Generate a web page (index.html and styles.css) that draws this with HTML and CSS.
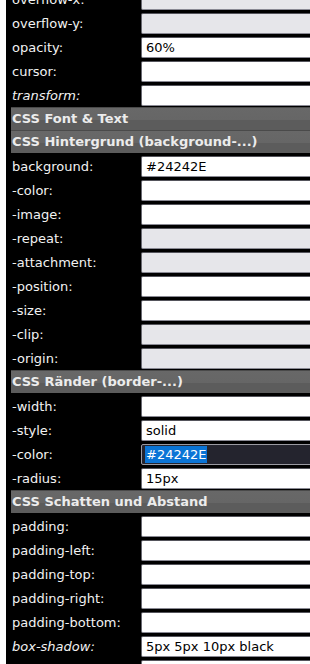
FILE: index.html
```html
<!DOCTYPE html>
<html lang="de">
<head>
<meta charset="UTF-8" />
<meta name="viewport" content="width=device-width, initial-scale=1" />
<title>CSS Editor</title>
<link rel="stylesheet" href="styles.css">
</head>
<body>

<div class="panel">
  <div class="row"><label>overflow-x:</label><input type="text" class="off" disabled /></div>
  <div class="row"><label>overflow-y:</label><input type="text" class="off" disabled /></div>
  <div class="row"><label>opacity:</label><input type="text" value="60%" /></div>
  <div class="row"><label>cursor:</label><input type="text" /></div>
  <div class="row"><label class="em">transform:</label><input type="text" /></div>

  <div class="head">CSS Font &amp; Text</div>
  <div class="head">CSS Hintergrund (background-...)</div>
  <div class="row"><label>background:</label><input type="text" value="#24242E" /></div>
  <div class="row"><label>-color:</label><input type="text" /></div>
  <div class="row"><label>-image:</label><input type="text" /></div>
  <div class="row"><label>-repeat:</label><input type="text" class="off" disabled /></div>
  <div class="row"><label>-attachment:</label><input type="text" class="off" disabled /></div>
  <div class="row"><label>-position:</label><input type="text" /></div>
  <div class="row"><label>-size:</label><input type="text" /></div>
  <div class="row"><label>-clip:</label><input type="text" class="off" disabled /></div>
  <div class="row"><label>-origin:</label><input type="text" class="off" disabled /></div>

  <div class="head">CSS Ränder (border-...)</div>
  <div class="row"><label>-width:</label><input type="text" /></div>
  <div class="row"><label>-style:</label><input type="text" value="solid" /></div>
  <div class="row"><label>-color:</label><div class="fake dark"><span class="sel">#24242E</span></div></div>
  <div class="row"><label>-radius:</label><input type="text" value="15px" /></div>

  <div class="head">CSS Schatten und Abstand</div>
  <div class="row"><label>padding:</label><input type="text" /></div>
  <div class="row"><label>padding-left:</label><input type="text" /></div>
  <div class="row"><label>padding-top:</label><input type="text" /></div>
  <div class="row"><label>padding-right:</label><input type="text" /></div>
  <div class="row"><label>padding-bottom:</label><input type="text" /></div>
  <div class="row"><label class="em">box-shadow:</label><input type="text" value="5px 5px 10px black" /></div>
  <div class="row"><label></label><input type="text" /></div>
</div>

</body>
</html>
```

FILE: styles.css
```css
body {
  margin: 0;
  background: #fff;
  font-family: "DejaVu Sans", Verdana, sans-serif;
  overflow: hidden;
}
.panel {
  margin: -14px 0 0 6px;
  padding-left: 5px;
  background: #000;
  width: 340px;
}
.row {
  display: grid;
  grid-template-columns: 130px 1fr;
  align-items: center;
  padding-top: 3px;
  color: #f2f2f2;
  font-size: 13px;
}
.row label {
  padding-left: 1px;
  line-height: 21px;
}
.row label.em {
  font-style: italic;
}
.row input,
.fake {
  box-sizing: border-box;
  height: 21px;
  margin: 0;
  padding: 0 4px;
  border: 1px solid #8a8a94;
  border-top-color: #55555c;
  border-left-color: #6a6a72;
  border-radius: 2px;
  background: #fff;
  font-family: "DejaVu Sans", Verdana, sans-serif;
  font-size: 13px;
  color: #000;
}
.row input.off {
  background: #e6e6ea;
}
.fake.dark {
  background: #24242e;
  border-color: #9a9aa2;
  display: flex;
  align-items: center;
  padding-left: 3px;
}
.sel {
  background: #0a74d6;
  color: #fff;
  line-height: 17px;
  padding: 0 1px;
}
.head {
  margin-top: 1px;
  height: 23px;
  line-height: 23px;
  padding-left: 1px;
  background: linear-gradient(#4a4a4a 0, #4a4a4a 1px, #686868 1px, #666 55%, #5c5c5c 55%, #5c5c5c 100%);
  color: #ececec;
  font-size: 13px;
  font-weight: bold;
}
.head + .head {
  margin-top: 0;
}
```
